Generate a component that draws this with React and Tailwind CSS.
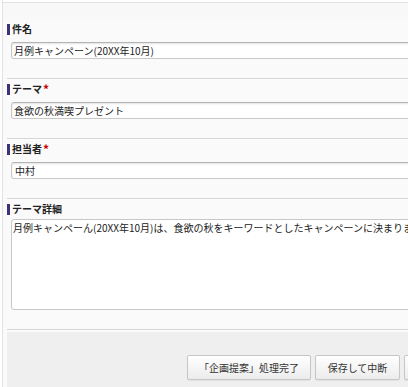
const font = { fontFamily: '"Noto Sans CJK JP", "Noto Sans", sans-serif' };

const Label = ({ children, required }) => (
  <div className="flex items-center h-[14px]">
    <span className="w-[3px] h-[11px] bg-[#3d3478] mr-[2px]"></span>
    <span className="text-[10px] font-bold text-[#222] leading-[14px]">{children}</span>
    {required && <span className="text-[12px] font-bold text-[#cc0000] leading-[14px] ml-[1px]">*</span>}
  </div>
);

const TextInput = ({ value, pad = "pl-[2px]" }) => (
  <div className={`ml-[4px] mt-[6px] h-[17px] bg-white border border-[#c8c8c8] border-t-[#b4b4b4] rounded-[3px] shadow-[inset_0_1px_2px_rgba(0,0,0,0.12)] ${pad} flex items-center text-[10px] text-[#222] whitespace-nowrap overflow-hidden`}>
    {value}
  </div>
);

const Section = ({ children, first }) => (
  <div className={`${first ? "pt-[3px]" : "pt-[3px]"} pb-[19px] border-b border-[#d6d6d6] shadow-[0_1px_0_#fdfdfd]`}>
    {children}
  </div>
);

const Button = ({ children, w }) => (
  <button className={`${w} h-[25px] shrink-0 border border-[#c6c6c6] rounded-[2px] bg-gradient-to-b from-white to-[#ececec] text-[10px] text-[#333] shadow-[0_1px_1px_rgba(0,0,0,0.06)]`}>
    {children}
  </button>
);

export default function App() {
  return (
    <div className="w-[408px] h-[387px] overflow-hidden bg-white" style={font}>
      <div className="w-[560px] h-full ml-[2px] border-l border-[#e2e2e2] bg-[#fafafa] flex flex-col">
        <div className="h-[2px] bg-white"></div>
        <div className="h-[17px] border-t border-[#e4e4e4] bg-[#f8f8f8]"></div>
        <div className="pl-[4px] flex flex-col flex-1">
          <Section first>
            <Label>件名</Label>
            <TextInput value="月例キャンペーン(20XX年10月)" />
          </Section>
          <Section>
            <Label required>テーマ</Label>
            <TextInput value="食欲の秋満喫プレゼント" />
          </Section>
          <Section>
            <Label required>担当者</Label>
            <TextInput value="中村" pad="pl-[3px]" />
          </Section>
          <Section>
            <Label>テーマ詳細</Label>
            <div className="ml-[4px] mt-[3px] h-[91px] bg-white border border-[#c8c8c8] rounded-[3px] px-[1px] pt-[1px] text-[10px] leading-[14px] text-[#222] whitespace-nowrap overflow-hidden">
              月例キャンペーん(20XX年10月)は、食欲の秋をキーワードとしたキャンペーンに決まりました。
            </div>
          </Section>
          <div className="mt-[2px] flex-1 bg-[#efefef] flex items-start pt-[23px] pl-[180px] gap-[4px]">
            <Button w="w-[124px]">「企画提案」処理完了</Button>
            <Button w="w-[85px]">保存して中断</Button>
            <Button w="w-[80px]">キャンセル</Button>
          </div>
        </div>
      </div>
    </div>
  );
}
